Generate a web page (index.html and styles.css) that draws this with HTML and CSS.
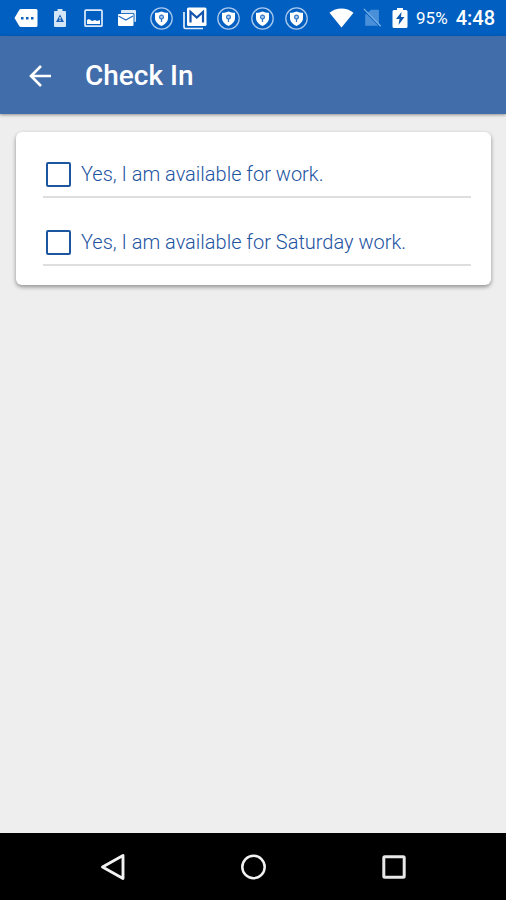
FILE: index.html
```html
<!DOCTYPE html>
<html lang="en">
<head>
<meta charset="utf-8">
<meta name="viewport" content="width=device-width, initial-scale=1">
<title>Check In</title>
<link rel="stylesheet" href="styles.css">
</head>
<body>
<svg class="defs" aria-hidden="true">
  <symbol id="shield" viewBox="0 0 24 24">
    <circle cx="11.500" cy="12.500" r="10.700" fill="none" stroke="#a9c8ed" stroke-width="1.300"/>
    <path d="M11.500 5.500c2 1 4 1.200 6.500 1.300v5.200c0 3.500-2.500 6-6.500 8-4-2-6.500-4.500-6.500-8V6.800c2.500-.1 4.500-.3 6.500-1.300z" fill="#fff"/>
    <circle cx="11.500" cy="11" r="1.900" fill="#b5d0ef" stroke="#3478c8" stroke-width="1.200"/>
    <path d="M11.500 13v3" stroke="#3478c8" stroke-width="1.300"/>
  </symbol>
</svg>
<div class="status">
  <div class="notifications">
    <svg viewBox="0 0 24 24"><path d="M7 3h15q1.500 0 1.500 1.500v15Q23.500 21 22 21H7q-1 0-1.600-.8L.5 12l4.900-8.200Q6 3 7 3z" fill="#fff"/><path d="M7 11h2.500v2.500H7zM12 11h2.500v2.500H12zM17 11h2.500v2.500H17z" fill="#0b60bd"/></svg>
    <svg viewBox="0 0 24 24"><path d="M9.500 3h5v2H17q1 0 1 1v14q0 1-1 1H7q-1 0-1-1V6q0-1 1-1h2.500z" fill="#d5e5f8"/><path d="M12 8.500l4 7.500H8z" fill="#1a62b5"/><path d="M11.500 11h1v2.500h-1zM11.500 14h1v1h-1z" fill="#fff"/></svg>
    <svg viewBox="0 0 24 24"><rect x="3" y="4.200" width="17" height="16" rx="1" fill="none" stroke="#deebfa" stroke-width="1.700"/><path d="M5 18v-4l2-1 3 2 3-1 2 1 3-1v4z" fill="#fff"/></svg>
    <svg viewBox="0 0 24 24"><path d="M6 4h13q1 0 1 1v10q0 1-1 1h-1V8.500Q18 7 16.500 7H5V5q0-1 1-1z" fill="#dceafa"/><path d="M4.500 7.500H17q1 0 1 1V16" fill="none" stroke="#2870c5" stroke-width="1.200"/><rect x="2" y="8" width="15.500" height="12" rx="1" fill="#fff"/><path d="M2.500 10l7.300 4 7.200-4" fill="none" stroke="#2870c5" stroke-width="1.400"/></svg>
    <svg viewBox="0 0 24 24"><use href="#shield"/></svg>
    <svg viewBox="0 0 24 24"><path d="M1 6v15Q1 22.500 2.500 22.500H20" fill="none" stroke="#e4effc" stroke-width="1.700"/><rect x="4" y="1.500" width="19.500" height="18.500" rx="1.500" fill="#fff"/><path d="M7.500 16.500V6l6.300 5.500L20 6v10.500" fill="none" stroke="#1453ad" stroke-width="2.200"/></svg>
    <svg viewBox="0 0 24 24"><use href="#shield"/></svg>
    <svg viewBox="0 0 24 24"><use href="#shield"/></svg>
    <svg viewBox="0 0 24 24"><use href="#shield"/></svg>
  </div>
  <div class="system">
    <svg class="wifi" viewBox="0 0 26 24"><path d="M.5 6.500Q6 2 13 2t12.500 4.500L13 22z" fill="#fff"/></svg>
    <svg viewBox="0 0 24 24"><path d="M10 3h8.500v17.500h-15V8.500z" fill="#4a90d9"/><path d="M2 3.500l18 18" stroke="#005fc0" stroke-width="1.500"/><path d="M2 2l18.500 19" stroke="#7db3e8" stroke-width="1.300"/></svg>
    <svg class="battery" viewBox="0 0 16 24"><path d="M5 2h6v2h3q1.500 0 1.500 1.500v15Q15.500 22 14 22H2Q.5 22 .5 20.500v-15Q.5 4 2 4h3z" fill="#fff"/><path d="M9.500 6L4 13h3.500L6.500 19l6-8H9z" fill="#0b56ae"/></svg>
    <span class="percent">95%</span>
    <span class="clock">4:48</span>
  </div>
</div>
<header class="appbar">
  <button class="back" type="button" aria-label="Back"><svg viewBox="0 0 24 24"><path d="M23 12H2.500M13 2L3 12l10 10" fill="none" stroke="#fff" stroke-width="2.600"/></svg></button>
  <h1>Check In</h1>
</header>
<main>
  <form class="card">
    <label class="option"><input type="checkbox" name="work"><span>Yes, I am available for work.</span></label>
    <label class="option"><input type="checkbox" name="saturday"><span>Yes, I am available for Saturday work.</span></label>
  </form>
</main>
<nav class="navbar">
  <button type="button" aria-label="Back"><svg viewBox="0 0 28 28"><path d="M25 2.500v23L4.500 14z" fill="none" stroke="#f2f2f2" stroke-width="2.900" stroke-linejoin="round"/></svg></button>
  <button type="button" aria-label="Home"><svg viewBox="0 0 28 28"><circle cx="14.500" cy="14" r="11.200" fill="none" stroke="#f2f2f2" stroke-width="2.500"/></svg></button>
  <button type="button" aria-label="Recent apps"><svg viewBox="0 0 28 28"><rect x="3.800" y="3.800" width="20.400" height="20.400" rx="1" fill="none" stroke="#e8e8e8" stroke-width="3"/></svg></button>
</nav>
</body>
</html>
```
FILE: styles.css
```css
* {
  box-sizing: border-box;
}

body {
  margin: 0;
  min-height: 100vh;
  display: flex;
  flex-direction: column;
  background: #eeeeee;
  font-family: Roboto, "Liberation Sans", sans-serif;
}

svg {
  display: block;
}

button {
  padding: 0;
  border: 0;
  background: none;
}

.defs {
  position: absolute;
  width: 0;
  height: 0;
}

.status {
  display: flex;
  align-items: center;
  gap: 20px;
  height: 36px;
  padding: 0 11px 0 14px;
  background: #005fc0;
  color: #fff;
}

.status svg {
  width: 24px;
  height: 24px;
}

.notifications {
  flex: 1;
  display: flex;
  justify-content: space-between;
}

.system {
  display: flex;
  align-items: center;
  gap: 8px;
}

.status .wifi {
  width: 25px;
}

.status .battery {
  width: 16px;
}

.status .wifi + svg {
  width: 22px;
}

.percent {
  font-size: 17px;
  line-height: 24px;
}

.clock {
  font-size: 20px;
  font-weight: 500;
  line-height: 24px;
}

.appbar {
  display: flex;
  align-items: center;
  gap: 33px;
  height: 78px;
  padding: 2px 28px 0;
  background: #426dab;
  color: #fff;
  box-shadow: 0 1px 3px rgba(0, 0, 0, 0.4);
}

.back svg {
  width: 24px;
  height: 24px;
}

.appbar h1 {
  margin: 0;
  font-size: 28px;
  font-weight: 500;
  line-height: 36px;
}

main {
  flex: 1;
  padding: 18px 15px 18px 16px;
}

.card {
  display: flex;
  flex-direction: column;
  gap: 18px;
  padding: 16px 20px 19px 27px;
  border-radius: 6px;
  background: #fff;
  box-shadow: 0 2px 4px rgba(0, 0, 0, 0.4);
}

.option {
  display: flex;
  align-items: center;
  gap: 10px;
  height: 50px;
  padding: 4px 3px 0;
  border-bottom: 2px solid #dedede;
  color: #1d539f;
  font-size: 20px;
  font-weight: 300;
  line-height: 26px;
}

.option input {
  appearance: none;
  width: 25px;
  height: 25px;
  margin: 0;
  border: 2px solid #1d559f;
  border-radius: 2px;
}

.option input:checked {
  background: #1d559f;
}

.navbar {
  display: flex;
  align-items: center;
  justify-content: center;
  gap: 113px;
  height: 67px;
  background: #000;
}

.navbar svg {
  width: 28px;
  height: 28px;
}
```
